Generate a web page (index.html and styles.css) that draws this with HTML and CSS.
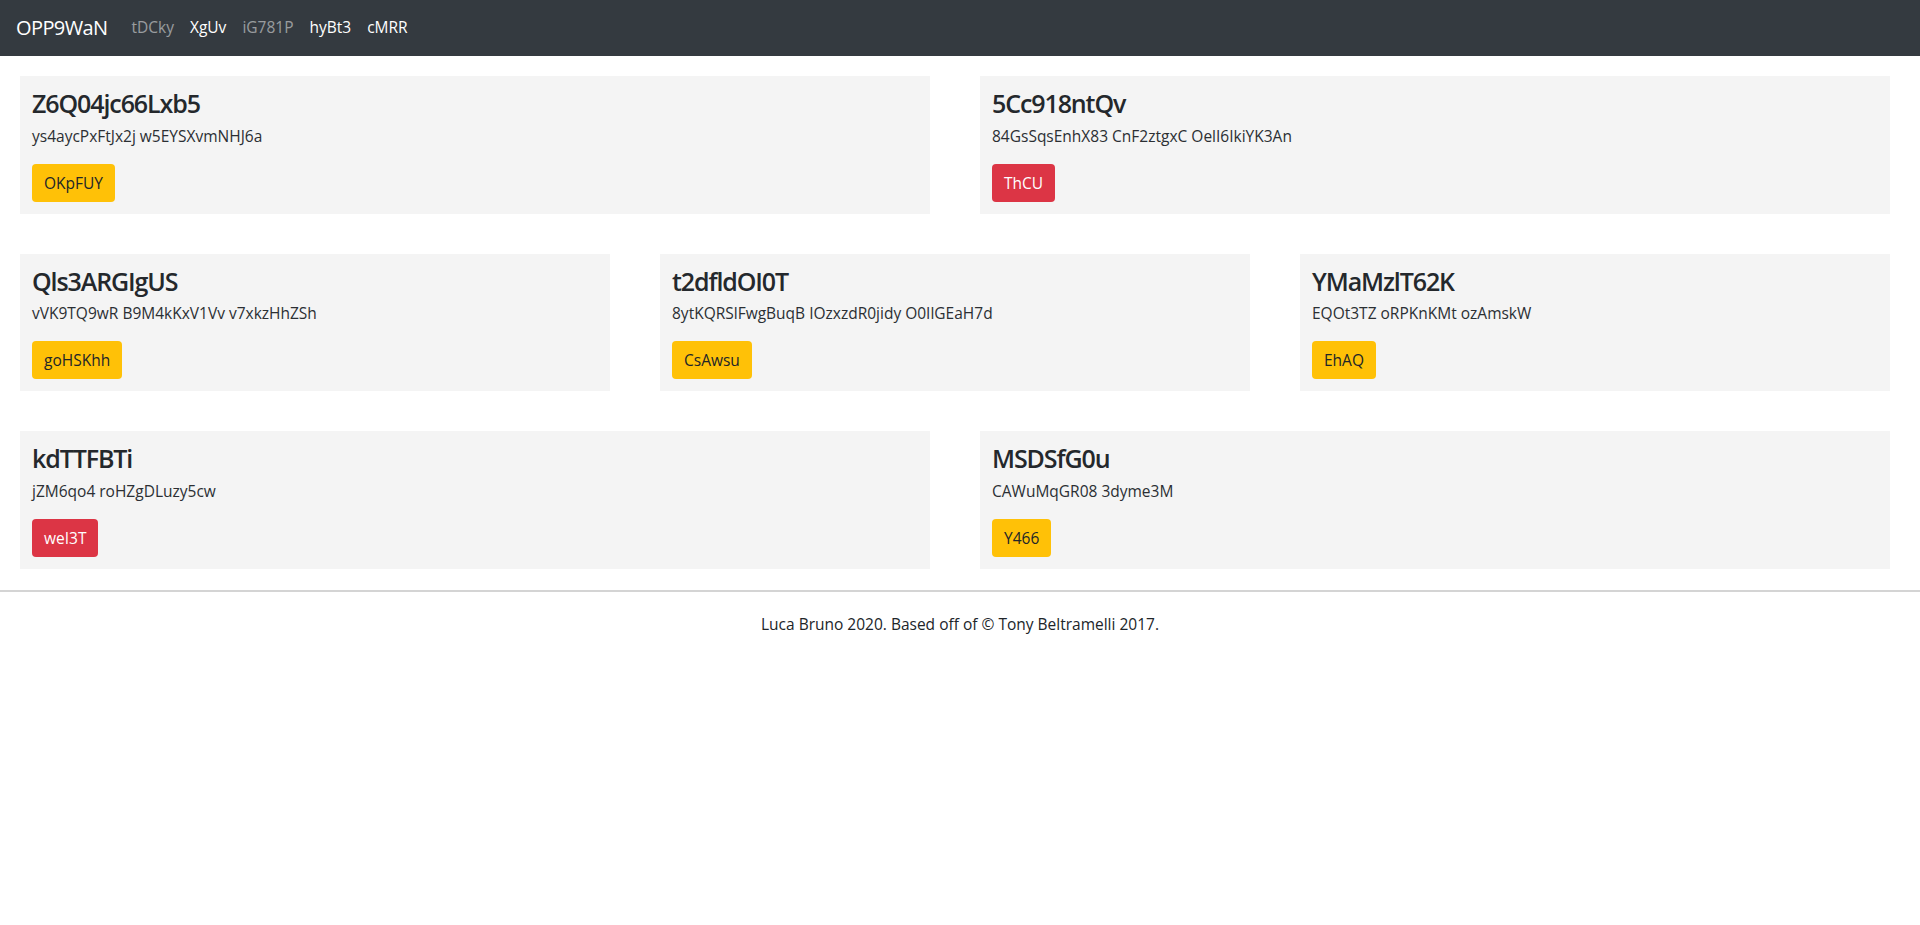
FILE: index.html
```html
<!DOCTYPE html>
<html lang="en">
<head>
<meta charset="utf-8">
<title>OPP9WaN</title>
<link rel="stylesheet" href="styles.css">
</head>
<body>
<nav class="navbar">
  <a class="brand" href="#">OPP9WaN</a>
  <ul class="nav">
    <li><a class="nav-link" href="#">tDCky</a></li>
    <li><a class="nav-link active" href="#">XgUv</a></li>
    <li><a class="nav-link" href="#">iG781P</a></li>
    <li><a class="nav-link active" href="#">hyBt3</a></li>
    <li><a class="nav-link active" href="#">cMRR</a></li>
  </ul>
</nav>
<main class="content">
  <div class="row">
    <div class="card">
      <h3>Z6Q04jc66Lxb5</h3>
      <p>ys4aycPxFtJx2j w5EYSXvmNHJ6a</p>
      <a class="btn btn-warning" href="#">OKpFUY</a>
    </div>
    <div class="card">
      <h3>5Cc918ntQv</h3>
      <p>84GsSqsEnhX83 CnF2ztgxC OelI6IkiYK3An</p>
      <a class="btn btn-danger" href="#">ThCU</a>
    </div>
  </div>
  <div class="row">
    <div class="card">
      <h3>Qls3ARGIgUS</h3>
      <p>vVK9TQ9wR B9M4kKxV1Vv v7xkzHhZSh</p>
      <a class="btn btn-warning" href="#">goHSKhh</a>
    </div>
    <div class="card">
      <h3>t2dfldOI0T</h3>
      <p>8ytKQRSlFwgBuqB IOzxzdR0jidy O0IlGEaH7d</p>
      <a class="btn btn-warning" href="#">CsAwsu</a>
    </div>
    <div class="card">
      <h3>YMaMzlT62K</h3>
      <p>EQOt3TZ oRPKnKMt ozAmskW</p>
      <a class="btn btn-warning" href="#">EhAQ</a>
    </div>
  </div>
  <div class="row">
    <div class="card">
      <h3>kdTTFBTi</h3>
      <p>jZM6qo4 roHZgDLuzy5cw</p>
      <a class="btn btn-danger" href="#">weI3T</a>
    </div>
    <div class="card">
      <h3>MSDSfG0u</h3>
      <p>CAWuMqGR08 3dyme3M</p>
      <a class="btn btn-warning" href="#">Y466</a>
    </div>
  </div>
</main>
<footer class="footer">
  <p>Luca Bruno 2020. Based off of &copy; Tony Beltramelli 2017.</p>
</footer>
</body>
</html>
```

FILE: styles.css
```css
* { box-sizing: border-box; }

html, body {
  margin: 0;
  padding: 0;
}

body {
  font-family: "Segoe UI", "Open Sans", "Noto Sans", sans-serif;
  font-size: 16px;
  line-height: 1.5;
  color: #212529;
  background: #fff;
}

a { text-decoration: none; }

.navbar {
  display: flex;
  align-items: center;
  height: 56px;
  padding: 8px 16px;
  background: #343a40;
}

.brand {
  font-size: 20px;
  line-height: 30px;
  letter-spacing: -0.6px;
  color: #fff;
  margin-right: 16px;
}

.nav {
  display: flex;
  list-style: none;
  margin: 0;
  padding: 0;
}

.nav-link {
  display: block;
  padding: 8px;
  font-size: 15.5px;
  color: rgba(255, 255, 255, 0.5);
}

.nav-link.active {
  color: #fff;
}

.content {
  padding: 20px 30px 0 20px;
  display: flex;
  flex-direction: column;
  gap: 40px;
}

.row {
  display: flex;
  gap: 50px;
}

.card {
  flex: 1 1 0;
  display: flex;
  flex-direction: column;
  align-items: flex-start;
  height: 137.6px;
  background: #f4f4f4;
  padding: 12px;
}

.card h3 {
  margin: -1px 0 3px;
  font-size: 25px;
  font-weight: 600;
  letter-spacing: -1.1px;
  line-height: 33.6px;
  color: #24282c;
}

.card p {
  margin: 0 0 16px;
  font-size: 15.5px;
  line-height: 24px;
  color: #2b2f33;
}

.btn {
  display: block;
  height: 38px;
  padding: 7px 12px;
  font-size: 15.5px;
  line-height: 24px;
  border-radius: 4px;
}

.btn-warning {
  background: #ffc107;
  color: #212529;
}

.btn-danger {
  background: #dc3545;
  color: #fff;
}

.footer {
  margin-top: 21px;
  border-top: 2px solid #d4d4d4;
  text-align: center;
}

.footer p {
  margin: 20px 0 0;
  font-size: 15.5px;
  line-height: 24px;
}
```
